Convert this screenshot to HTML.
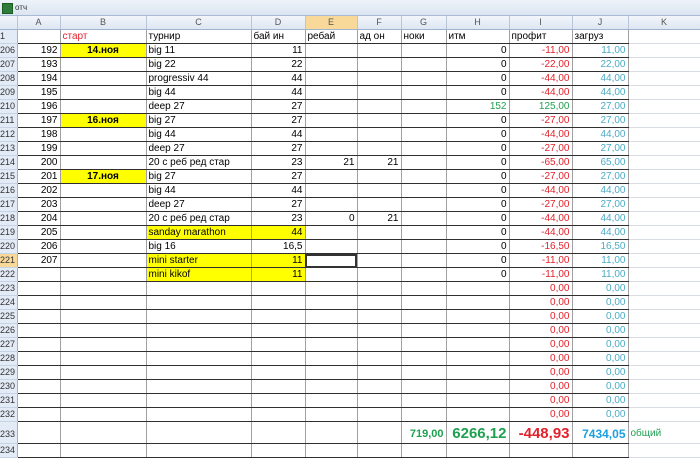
<!DOCTYPE html>
<html><head><meta charset="utf-8"><style>
body{margin:0;width:700px;height:449px;overflow:hidden;background:#fff;font-family:"Liberation Sans",sans-serif;font-size:10px;}
.title{height:16px;background:linear-gradient(#eef3fa,#dbe5f1);border-bottom:1px solid #a9bbd4;box-sizing:border-box;position:relative;color:#333;font-size:8px;}
.title .ic{position:absolute;left:2px;top:3px;width:9px;height:9px;background:#2e7d3c;border:1px solid #1b5e20;}
.title span{position:absolute;left:15px;top:3px;}
table{border-collapse:collapse;table-layout:fixed;width:700px;}
td{padding:0 2px;overflow:hidden;white-space:nowrap;height:14px;line-height:13px;border-right:1px solid #a0a0a0;border-bottom:1px solid #303030;box-sizing:border-box;}
tr.hd td{background:linear-gradient(#f3f6fb,#dde6f2);color:#555;text-align:center;border-right:1px solid #b8c6d8;border-bottom:1px solid #9eb3cc;height:13px;font-size:9px;}
td.rh{background:#e3ebf6;color:#333;text-align:left;padding-left:0;border-right:1px solid #9eb3cc;border-bottom:1px solid #c5d3e4;font-size:9px;}
td.k{border-right:none;border-bottom:1px solid #d8dde5;}
.r{text-align:right}.c{text-align:center}
.y{background:#ffff00}.b{font-weight:bold}
.red{color:#e3212b}.bl{color:#4bacc6}.gr{color:#1fa050}
tr.big td{height:21px;line-height:18px;padding-top:3px;vertical-align:middle;}
</style></head><body>
<div class="title"><div class="ic"></div><span>отч</span></div>
<table>
<colgroup><col style="width:17px"><col style="width:43px"><col style="width:86px"><col style="width:105px"><col style="width:54px"><col style="width:52px"><col style="width:44px"><col style="width:45px"><col style="width:63px"><col style="width:63px"><col style="width:56px"><col style="width:72px"></colgroup>
<tr class="hd"><td></td><td>A</td><td>B</td><td>C</td><td>D</td><td style="background:#f8d99a">E</td><td>F</td><td>G</td><td>H</td><td>I</td><td>J</td><td>K</td></tr>
<tr><td class="rh">1</td><td></td><td class="red">старт</td><td>турнир</td><td>бай ин</td><td>ребай</td><td>ад он</td><td>ноки</td><td>итм</td><td>профит</td><td>загруз</td><td class="k"></td></tr>
<tr><td class="rh">206</td><td class="r">192</td><td class="c y b">14.ноя</td><td>big 11</td><td class="r">11</td><td></td><td></td><td></td><td class="r">0</td><td class="r red">-11,00</td><td class="r bl">11,00</td><td class="k"></td></tr>
<tr><td class="rh">207</td><td class="r">193</td><td></td><td>big 22</td><td class="r">22</td><td></td><td></td><td></td><td class="r">0</td><td class="r red">-22,00</td><td class="r bl">22,00</td><td class="k"></td></tr>
<tr><td class="rh">208</td><td class="r">194</td><td></td><td>progressiv 44</td><td class="r">44</td><td></td><td></td><td></td><td class="r">0</td><td class="r red">-44,00</td><td class="r bl">44,00</td><td class="k"></td></tr>
<tr><td class="rh">209</td><td class="r">195</td><td></td><td>big 44</td><td class="r">44</td><td></td><td></td><td></td><td class="r">0</td><td class="r red">-44,00</td><td class="r bl">44,00</td><td class="k"></td></tr>
<tr><td class="rh">210</td><td class="r">196</td><td></td><td>deep 27</td><td class="r">27</td><td></td><td></td><td></td><td class="r gr">152</td><td class="r gr">125,00</td><td class="r bl">27,00</td><td class="k"></td></tr>
<tr><td class="rh">211</td><td class="r">197</td><td class="c y b">16.ноя</td><td>big 27</td><td class="r">27</td><td></td><td></td><td></td><td class="r">0</td><td class="r red">-27,00</td><td class="r bl">27,00</td><td class="k"></td></tr>
<tr><td class="rh">212</td><td class="r">198</td><td></td><td>big 44</td><td class="r">44</td><td></td><td></td><td></td><td class="r">0</td><td class="r red">-44,00</td><td class="r bl">44,00</td><td class="k"></td></tr>
<tr><td class="rh">213</td><td class="r">199</td><td></td><td>deep 27</td><td class="r">27</td><td></td><td></td><td></td><td class="r">0</td><td class="r red">-27,00</td><td class="r bl">27,00</td><td class="k"></td></tr>
<tr><td class="rh">214</td><td class="r">200</td><td></td><td>20 с реб ред стар</td><td class="r">23</td><td class="r">21</td><td class="r">21</td><td></td><td class="r">0</td><td class="r red">-65,00</td><td class="r bl">65,00</td><td class="k"></td></tr>
<tr><td class="rh">215</td><td class="r">201</td><td class="c y b">17.ноя</td><td>big 27</td><td class="r">27</td><td></td><td></td><td></td><td class="r">0</td><td class="r red">-27,00</td><td class="r bl">27,00</td><td class="k"></td></tr>
<tr><td class="rh">216</td><td class="r">202</td><td></td><td>big 44</td><td class="r">44</td><td></td><td></td><td></td><td class="r">0</td><td class="r red">-44,00</td><td class="r bl">44,00</td><td class="k"></td></tr>
<tr><td class="rh">217</td><td class="r">203</td><td></td><td>deep 27</td><td class="r">27</td><td></td><td></td><td></td><td class="r">0</td><td class="r red">-27,00</td><td class="r bl">27,00</td><td class="k"></td></tr>
<tr><td class="rh">218</td><td class="r">204</td><td></td><td>20 с реб ред стар</td><td class="r">23</td><td class="r">0</td><td class="r">21</td><td></td><td class="r">0</td><td class="r red">-44,00</td><td class="r bl">44,00</td><td class="k"></td></tr>
<tr><td class="rh">219</td><td class="r">205</td><td></td><td class="y">sanday marathon</td><td class="r y">44</td><td></td><td></td><td></td><td class="r">0</td><td class="r red">-44,00</td><td class="r bl">44,00</td><td class="k"></td></tr>
<tr><td class="rh">220</td><td class="r">206</td><td></td><td>big 16</td><td class="r">16,5</td><td></td><td></td><td></td><td class="r">0</td><td class="r red">-16,50</td><td class="r bl">16,50</td><td class="k"></td></tr>
<tr><td class="rh" style="background:#f8d99a">221</td><td class="r">207</td><td></td><td class="y">mini starter</td><td class="r y">11</td><td style="outline:2px solid #333;outline-offset:-2px"></td><td></td><td></td><td class="r">0</td><td class="r red">-11,00</td><td class="r bl">11,00</td><td class="k"></td></tr>
<tr><td class="rh">222</td><td></td><td></td><td class="y">mini kikof</td><td class="r y">11</td><td></td><td></td><td></td><td class="r">0</td><td class="r red">-11,00</td><td class="r bl">11,00</td><td class="k"></td></tr>
<tr><td class="rh">223</td><td></td><td></td><td></td><td></td><td></td><td></td><td></td><td></td><td class="r red">0,00</td><td class="r bl">0,00</td><td class="k"></td></tr>
<tr><td class="rh">224</td><td></td><td></td><td></td><td></td><td></td><td></td><td></td><td></td><td class="r red">0,00</td><td class="r bl">0,00</td><td class="k"></td></tr>
<tr><td class="rh">225</td><td></td><td></td><td></td><td></td><td></td><td></td><td></td><td></td><td class="r red">0,00</td><td class="r bl">0,00</td><td class="k"></td></tr>
<tr><td class="rh">226</td><td></td><td></td><td></td><td></td><td></td><td></td><td></td><td></td><td class="r red">0,00</td><td class="r bl">0,00</td><td class="k"></td></tr>
<tr><td class="rh">227</td><td></td><td></td><td></td><td></td><td></td><td></td><td></td><td></td><td class="r red">0,00</td><td class="r bl">0,00</td><td class="k"></td></tr>
<tr><td class="rh">228</td><td></td><td></td><td></td><td></td><td></td><td></td><td></td><td></td><td class="r red">0,00</td><td class="r bl">0,00</td><td class="k"></td></tr>
<tr><td class="rh">229</td><td></td><td></td><td></td><td></td><td></td><td></td><td></td><td></td><td class="r red">0,00</td><td class="r bl">0,00</td><td class="k"></td></tr>
<tr><td class="rh">230</td><td></td><td></td><td></td><td></td><td></td><td></td><td></td><td></td><td class="r red">0,00</td><td class="r bl">0,00</td><td class="k"></td></tr>
<tr><td class="rh">231</td><td></td><td></td><td></td><td></td><td></td><td></td><td></td><td></td><td class="r red">0,00</td><td class="r bl">0,00</td><td class="k"></td></tr>
<tr><td class="rh">232</td><td></td><td></td><td></td><td></td><td></td><td></td><td></td><td></td><td class="r red">0,00</td><td class="r bl">0,00</td><td class="k"></td></tr>
<tr class="big"><td class="rh">233</td><td></td><td></td><td></td><td></td><td></td><td></td><td class="r gr b" style="font-size:11px">719,00</td><td class="r gr b" style="font-size:15px">6266,12</td><td class="r red b" style="font-size:15px">-448,93</td><td class="r b" style="color:#1ea0e0;font-size:12px">7434,05</td><td class="k gr" style="font-size:10px">общий</td></tr>
<tr><td class="rh">234</td><td></td><td></td><td></td><td></td><td></td><td></td><td></td><td></td><td></td><td></td><td class="k"></td></tr>
</table>
</body></html>
